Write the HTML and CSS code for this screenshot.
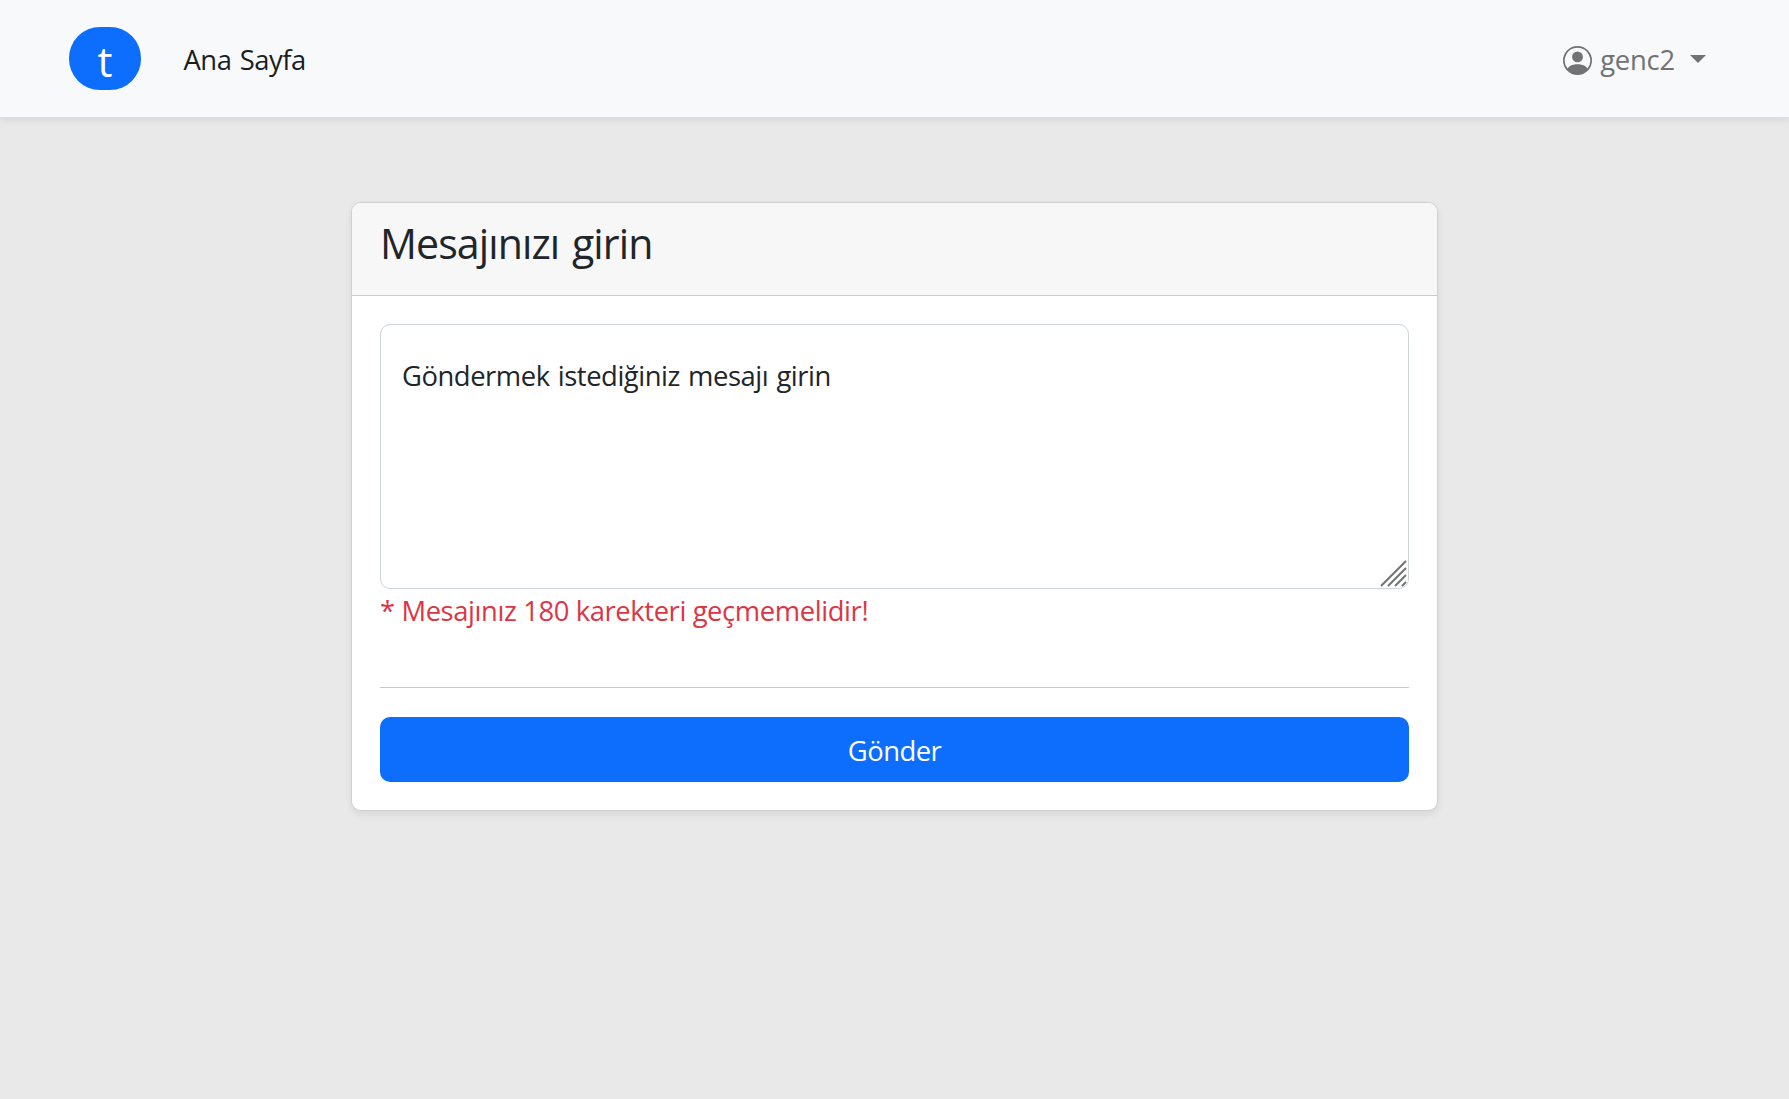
FILE: index.html
```html
<!DOCTYPE html>
<html lang="tr">
<head>
<meta charset="utf-8">
<title>Mesaj</title>
<link rel="stylesheet" href="styles.css">
</head>
<body>
<nav class="navbar">
  <a class="brand" href="#"><span class="brand-letter">t</span></a>
  <a class="nav-link" href="#">Ana Sayfa</a>
  <a class="user" href="#">
    <svg class="user-icon" viewBox="0 0 16 16" fill="currentColor"><path d="M11 6a3 3 0 1 1-6 0 3 3 0 0 1 6 0z"/><path fill-rule="evenodd" d="M0 8a8 8 0 1 1 16 0A8 8 0 0 1 0 8zm8-7a7 7 0 0 0-5.468 11.370C3.242 11.226 4.805 10 8 10s4.757 1.225 5.468 2.370A7 7 0 0 0 8 1z"/></svg>
    <span class="user-name">genc2</span>
    <span class="caret"></span>
  </a>
</nav>
<main class="card">
  <header class="card-header"><h1 class="title">Mesajınızı girin</h1></header>
  <form class="card-body">
    <div class="field">
      <textarea class="message" aria-label="Mesaj">Göndermek istediğiniz mesajı girin</textarea>
      <svg class="grip" viewBox="0 0 27 27"><path d="M1 26 26 1M8 26 26 8M15 26 26 15M22 26l4-4"/></svg>
    </div>
    <p class="hint">* Mesajınız 180 karekteri geçmemelidir!</p>
    <hr class="divider">
    <button class="submit" type="button">Gönder</button>
  </form>
</main>
</body>
</html>
```
FILE: styles.css
```css
* { box-sizing: border-box; }
body {
  display: flow-root;
  min-height: 100vh;
  margin: 0;
  background: #e9e9e9;
  color: #212529;
  font: 27.4px/42px "Open Sans", sans-serif;
  letter-spacing: -.45px;
  word-spacing: 1.5px;
}
a { color: inherit; text-decoration: none; }
.navbar {
  display: flex;
  align-items: center;
  height: 117px;
  padding: 0 83px 0 69px;
  background: #f8f9fb;
  box-shadow: 0 3.5px 7px rgba(0, 0, 0, .075);
}
.brand {
  display: flex;
  justify-content: center;
  width: 72px;
  height: 63px;
  padding-top: 2px;
  border-radius: 31px;
  background: #0d6efd;
  color: #fff;
  font-size: 42px;
  line-height: 63px;
  letter-spacing: 0;
}
.nav-link { margin-left: 42.5px; padding-top: 3px; color: #1a1c1e; }
.user {
  display: flex;
  align-items: center;
  margin-left: auto;
  color: #717273;
}
.user-icon { width: 29px; height: 29px; margin-top: 3px; }
.user-name { margin-left: 8px; padding-top: 3px; letter-spacing: -.2px; }
.caret {
  margin-left: 15px;
  border: 8px solid transparent;
  border-top-color: currentColor;
  border-bottom: 0;
}
.card {
  width: 1087px;
  height: 609px;
  margin: 85px auto 0;
  border: 1px solid #cfcfcf;
  border-radius: 10px;
  background: #fff;
  box-shadow: 0 3.5px 7px rgba(0, 0, 0, .075);
}
.card-header {
  height: 93px;
  padding: 15px 28px 0;
  border-bottom: 1px solid #cbcbcb;
  border-radius: 9px 9px 0 0;
  background: #f7f7f7;
}
.title {
  margin: 0;
  font-size: 41.1px;
  font-weight: 400;
  line-height: 50px;
  letter-spacing: -.92px;
  word-spacing: 3px;
}
.card-body { padding: 28px; }
.field { position: relative; height: 265px; }
.message {
  display: block;
  width: 100%;
  height: 100%;
  padding: 30px 21px;
  resize: none;
  border: 1px solid #ced4da;
  border-radius: 10px;
  background: transparent;
  color: inherit;
  font: inherit;
  letter-spacing: inherit;
  word-spacing: inherit;
}
.grip {
  position: absolute;
  right: 2px;
  bottom: 2px;
  width: 27px;
  height: 27px;
  fill: none;
  stroke: #757575;
  stroke-width: 2.1;
}
.hint {
  margin: 0;
  padding-top: 1px;
  color: #dc3545;
  letter-spacing: -.4px;
  word-spacing: 0;
}
.divider { height: 1px; margin: 55px 0 29px; border: 0; background: #c7c8c9; }
.submit {
  display: block;
  width: 100%;
  height: 65px;
  padding: 3px 0 0;
  border: 0;
  border-radius: 10px;
  background: #0d6efd;
  color: #fff;
  font: inherit;
  letter-spacing: -.5px;
}
```
